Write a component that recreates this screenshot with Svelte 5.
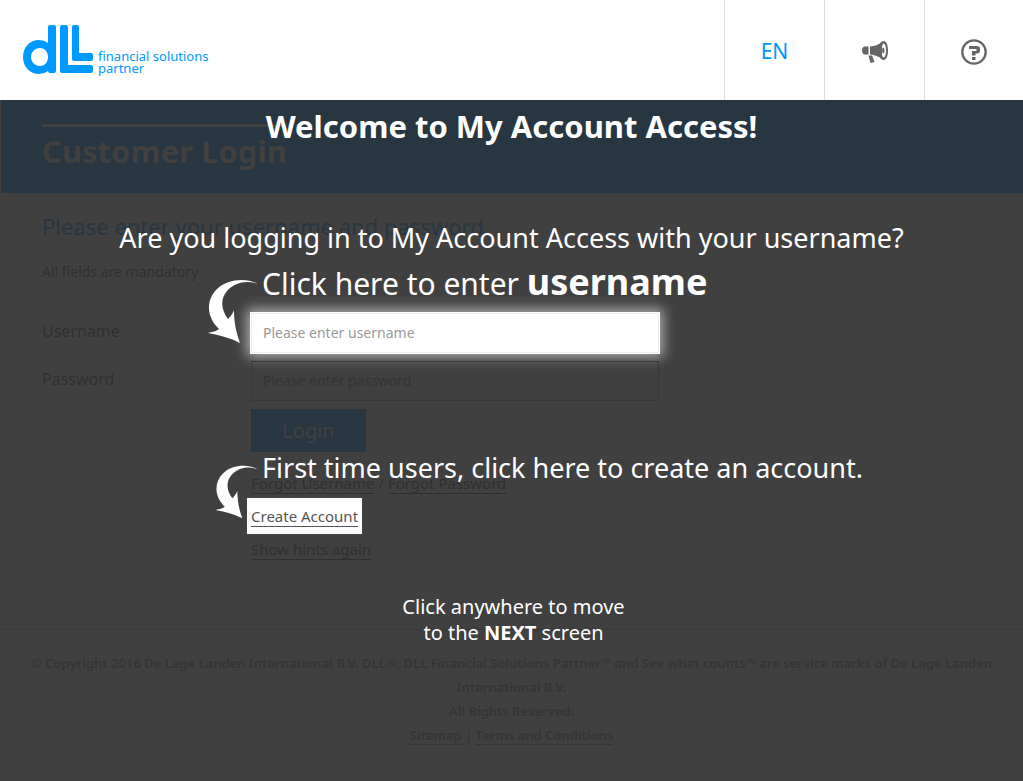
<script>
  const footerLinks = ['Sitemap', 'Terms and Conditions'];
  let username = $state('');
  let password = $state('');
</script>

{#snippet arrow(kind)}
  <svg class="arrow {kind}" viewBox="0 0 50 66" aria-hidden="true">
    <path d="M50 5C40-1 20-1 9 10C-3 22-1 39 11 50C9 52 4 53 0 54C12 56 22 59 32 64C28 53 26 43 26 31C25 34 23 37 20 40C13 31 12 20 19 12C27 3 39 1 50 5Z" />
  </svg>
{/snippet}

<div class="page">
  <header>
    <a class="logo" href="#home" aria-label="DLL financial solutions partner">
      <svg viewBox="0 0 70 49" width="70" height="49" aria-hidden="true">
        <path fill-rule="evenodd" d="M27 0H31Q33 0 33 2V46Q33 48 31 48H27Q25 48 25 46Q21 49 16 49C7 49 0 42 0 32C0 22 7 15 16 15Q21 15 25 18V2Q25 0 27 0ZM17 23C12 23 8 27 8 32C8 37 12 41 17 41C22 41 25 37 25 32C25 27 22 23 17 23Z" />
        <path d="M39 0H43Q45 0 45 2V40H68Q70 40 70 42V46Q70 48 68 48H39Q37 48 37 46V2Q37 0 39 0Z" />
        <path d="M51 0H54Q56 0 56 2V28H68Q70 28 70 30V34Q70 36 68 36H51Q49 36 49 34V2Q49 0 51 0Z" />
      </svg>
      <span>financial solutions<br />partner</span>
    </a>
    <nav>
      <button class="lang">EN</button>
      <button aria-label="News">
        <svg viewBox="0 0 26 22" width="26" height="22" aria-hidden="true">
          <path d="M2 5.500H6.500V13.500H2Q0 12.500 0 9.500Q0 6.500 2 5.500ZM8 5.500Q15 5 20 1V18Q15 14 8 13.500ZM6.500 14.500H10L12.500 21L8.500 22Z" />
          <path fill-rule="evenodd" d="M21.500 0C24.500 0 26 4 26 9.500C26 15 24.500 19 21.500 19C18.500 19 17 15 17 9.500C17 4 18.500 0 21.500 0ZM21.700 2.500C20.300 3 19.700 6 19.700 9.500C19.700 13 20.300 16 21.700 16.500C23.300 16 24 13 24 9.500C24 6 23.300 3 21.700 2.500Z" />
          <ellipse cx="21.300" cy="9.500" rx="1.200" ry="3" />
        </svg>
      </button>
      <button aria-label="Help">
        <svg viewBox="0 0 26 26" width="26" height="26" aria-hidden="true">
          <circle cx="13" cy="13" r="11.700" fill="none" stroke="#666" stroke-width="2.300" />
          <path d="M8 7H16Q19 7 19 10V11.500Q19 14.500 16 14.500H14.500V16.500H11V12H14.500Q15.700 12 15.700 11Q15.700 10 14.500 10H8ZM11 18H14.500V21H11Z" />
        </svg>
      </button>
    </nav>
  </header>

  <main>
    <div class="banner">
      <h1>Customer Login</h1>
    </div>
    <form>
      <h2>Please enter your username and password</h2>
      <p class="note">All fields are mandatory</p>
      <div class="fields">
        <label for="username">Username</label>
        <input id="username" class="spot" type="text" placeholder="Please enter username" bind:value={username} />
        <label for="password">Password</label>
        <input id="password" type="password" placeholder="Please enter password" bind:value={password} />
        <div class="actions">
          <button type="button" class="login">Login</button>
          <p><a href="#forgot-username">Forgot Username</a> / <a href="#forgot-password">Forgot Password</a></p>
          <p><span class="create"><a href="#create">Create Account</a></span></p>
          <p><a href="#hints">Show hints again</a></p>
        </div>
      </div>
    </form>

    <!-- hints drawn over the login form -->
    <section class="hints">
      <p class="welcome">Welcome to My Account Access!</p>
      <p class="question">Are you logging in to My Account Access with your username?</p>
      <div class="hint first">
        {@render arrow('large')}
        <p>Click here to enter <strong>username</strong></p>
      </div>
      <div class="hint second">
        {@render arrow('small')}
        <p>First time users, click here to create an account.</p>
      </div>
      <p class="next">Click anywhere to move<br />to the <strong>NEXT</strong> screen</p>
    </section>
  </main>

  <footer>
    <p>© Copyright 2016 De Lage Landen International B.V. DLL®, DLL Financial Solutions Partner℠ and See what counts℠ are service marks of De Lage Landen International B.V.</p>
    <p>All Rights Reserved.</p>
    <p>
      {#each footerLinks as link, i}{#if i > 0}{' | '}{/if}<a href="#footer">{link}</a>{/each}
    </p>
  </footer>
</div>

<style>
  :global(body) {
    background: #404040;
  }

  .page {
    min-height: 100vh;
    font-family: 'Noto Sans', sans-serif;
    background: #404040;
    color: #303030;
  }

  h1, h2, p {
    margin: 0;
  }

  a {
    color: inherit;
  }

  header {
    display: flex;
    justify-content: space-between;
    height: 100px;
    background: white;
  }

  .logo {
    display: flex;
    align-items: flex-start;
    gap: 5px;
    padding: 25px 0 0 23px;
    color: #0099ff;
    fill: #0099ff;
    font-size: 13px;
    line-height: 12px;
    text-decoration: none;
  }

  .logo span {
    padding-top: 25px;
  }

  nav {
    display: flex;
  }

  nav button {
    display: flex;
    align-items: center;
    justify-content: center;
    width: 100px;
    padding: 4px 0 0;
    border: 0;
    border-left: 1px solid #ddd;
    background: white;
    fill: #666;
  }

  nav button:last-child {
    width: 99px;
  }

  nav .lang {
    padding-top: 2px;
    font: 21px 'Noto Sans', sans-serif;
    color: #0099ff;
  }

  main {
    position: relative;
  }

  .banner {
    height: 93px;
    box-sizing: border-box;
    margin-left: 1px;
    padding: 24px 41px 0;
    background: #283641;
  }

  h1 {
    width: fit-content;
    border-top: 3px solid #404040;
    font-size: 31px;
    line-height: 48px;
    color: #404040;
  }

  form {
    padding: 18px 42px 63px;
  }

  h2 {
    font-size: 22px;
    line-height: 30px;
    font-weight: 400;
    color: #283641;
  }

  .note {
    padding: 19px 0 29px;
    font-size: 14px;
    line-height: 24px;
  }

  .fields {
    display: grid;
    grid-template-columns: 209px minmax(0, 408px);
    row-gap: 8px;
  }

  label {
    font-size: 16px;
    line-height: 36px;
  }

  input {
    height: 40px;
    box-sizing: border-box;
    padding: 0 11px 2px;
    border: 1px solid #383838;
    background: transparent;
    font: 14px 'Noto Sans', sans-serif;
  }

  input::placeholder {
    color: #343434;
    opacity: 1;
  }

  .spot {
    border-color: #eee;
    background: white;
    box-shadow: 0 0 0 1px white, 0 0 12px 4px rgba(255, 255, 255, 0.6);
  }

  .spot::placeholder {
    color: #999;
  }

  .actions {
    grid-column: 2;
    font-size: 15px;
    line-height: 33px;
  }

  .login {
    display: block;
    width: 115px;
    height: 43px;
    margin-bottom: 15px;
    border: 0;
    background: #283641;
    color: #404040;
    font: 20px 'Noto Sans', sans-serif;
  }

  .actions a, footer a {
    text-decoration: none;
    border-bottom: 1px solid currentColor;
  }

  .create {
    display: inline-block;
    margin: -2px -4px;
    padding: 2px 4px;
    background: white;
    color: #555;
    line-height: 32px;
  }

  .hints {
    position: absolute;
    inset: 0;
    color: white;
    text-align: center;
    pointer-events: none;
  }

  .welcome {
    padding-top: 4px;
    font-size: 31px;
    line-height: 44px;
    font-weight: 700;
  }

  .question {
    padding-top: 70px;
    font-size: 27px;
    line-height: 40px;
  }

  .hint {
    display: flex;
    align-items: flex-start;
    gap: 4px;
    text-align: left;
    fill: white;
  }

  .first {
    height: 106px;
    padding: 4px 0 0 208px;
    font-size: 30px;
    line-height: 40px;
  }

  .first strong {
    font-size: 36px;
  }

  .second {
    height: 80px;
    padding: 80px 0 0 215px;
    font-size: 27px;
    line-height: 40px;
  }

  .arrow {
    flex: none;
    margin-top: 17px;
  }

  .large {
    width: 50px;
    height: 66px;
  }

  .small {
    width: 43px;
    height: 55px;
  }

  .next {
    padding: 66px 0 0 4px;
    font-size: 20px;
    line-height: 26px;
  }

  footer {
    padding: 21px 20px 34px;
    border-top: 1px solid #3a3a3a;
    font-size: 13px;
    line-height: 24px;
    font-weight: 600;
    text-align: center;
    color: #353535;
  }
</style>
